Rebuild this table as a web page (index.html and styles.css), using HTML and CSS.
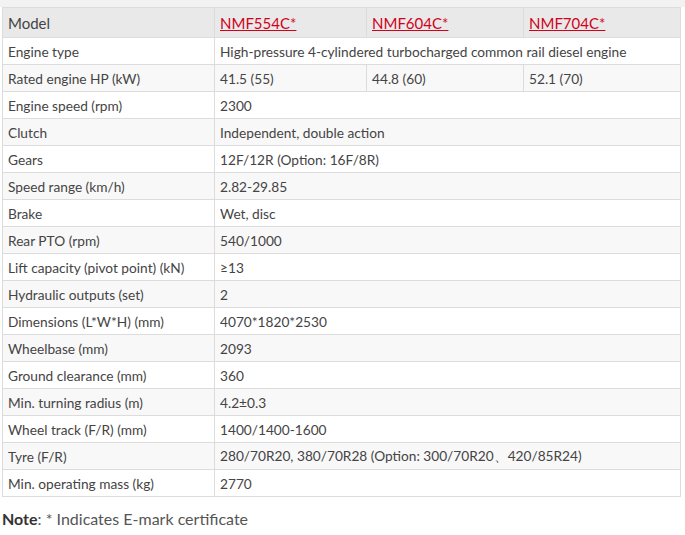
FILE: index.html
```html
<!DOCTYPE html>
<html>
<head>
<meta charset="utf-8">
<link rel="stylesheet" href="styles.css">
</head>
<body>
<div class="top-strip"></div>
<div class="wrap">
<table class="spec">
  <colgroup>
    <col class="c1"><col class="c2"><col class="c3"><col class="c4">
  </colgroup>
  <thead>
    <tr class="head">
      <th>Model</th>
      <th><a href="#">NMF554C*</a></th>
      <th><a href="#">NMF604C*</a></th>
      <th><a href="#">NMF704C*</a></th>
    </tr>
  </thead>
  <tbody>
    <tr><td>Engine type</td><td colspan="3">High-pressure 4-cylindered turbocharged common rail diesel engine</td></tr>
    <tr><td>Rated engine HP (kW)</td><td>41.5 (55)</td><td>44.8 (60)</td><td>52.1 (70)</td></tr>
    <tr><td>Engine speed (rpm)</td><td colspan="3">2300</td></tr>
    <tr><td>Clutch</td><td colspan="3">Independent, double action</td></tr>
    <tr><td>Gears</td><td colspan="3">12F/12R (Option: 16F/8R)</td></tr>
    <tr><td>Speed range (km/h)</td><td colspan="3">2.82-29.85</td></tr>
    <tr><td>Brake</td><td colspan="3">Wet, disc</td></tr>
    <tr><td>Rear PTO (rpm)</td><td colspan="3">540/1000</td></tr>
    <tr><td>Lift capacity (pivot point) (kN)</td><td colspan="3">≥13</td></tr>
    <tr><td>Hydraulic outputs (set)</td><td colspan="3">2</td></tr>
    <tr><td>Dimensions (L*W*H) (mm)</td><td colspan="3">4070*1820*2530</td></tr>
    <tr><td>Wheelbase (mm)</td><td colspan="3">2093</td></tr>
    <tr><td>Ground clearance (mm)</td><td colspan="3">360</td></tr>
    <tr><td>Min. turning radius (m)</td><td colspan="3">4.2±0.3</td></tr>
    <tr><td>Wheel track (F/R) (mm)</td><td colspan="3">1400/1400-1600</td></tr>
    <tr><td>Tyre (F/R)</td><td colspan="3">280/70R20, 380/70R28 (Option: 300/70R20、420/85R24)</td></tr>
    <tr><td>Min. operating mass (kg)</td><td colspan="3">2770</td></tr>
  </tbody>
</table>
<p class="note"><b>Note</b>: * Indicates E-mark certificate</p>
</div>
</body>
</html>
```
FILE: styles.css
```css
html, body {
  margin: 0;
  padding: 0;
  background: #ffffff;
  font-family: Lato, "Open Sans", sans-serif;
  color: #444444;
}
.top-strip {
  height: 7px;
  background: #f2f2f2;
}
.wrap {
  padding-left: 2px;
}
.spec {
  border-collapse: collapse;
  width: 678px;
  table-layout: fixed;
  font-size: 13.7px;
}
.c1 { width: 212px; }
.c2 { width: 152px; }
.c3 { width: 157px; }
.c4 { width: 157px; }
.spec th, .spec td {
  border: 1px solid #dcdcdc;
  padding: 0 5px;
  text-align: left;
  font-weight: normal;
  white-space: nowrap;
  height: 26px;
}
.spec .head th {
  background: #e9e9e9;
  height: 29px;
  font-size: 15px;
}
.spec tbody tr:nth-child(even) td {
  background: #f8f8f8;
}
.spec a {
  color: #d0021b;
  text-decoration: underline;
}
.note {
  margin: 12px 0 0 0;
  font-size: 16px;
  color: #555555;
}
.note b {
  color: #333333;
}
```
